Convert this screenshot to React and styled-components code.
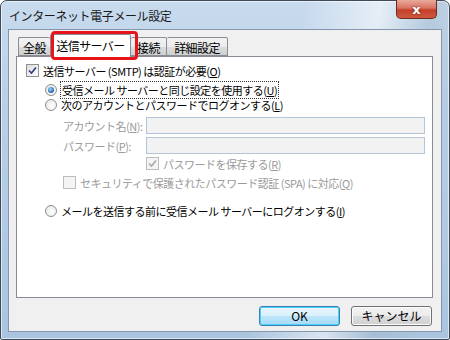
import React from 'react'
import styled, { createGlobalStyle } from 'styled-components'

const GlobalStyle = createGlobalStyle`
  html, body {
    margin: 0;
    padding: 0;
    background: #ffffff;
  }
  body {
    font-family: "Noto Sans CJK JP", "Liberation Sans", sans-serif;
    font-size: 11px;
  }
`

const Window = styled.div`
  width: 450px;
  height: 340px;
  box-sizing: border-box;
  position: relative;
  display: flex;
  flex-direction: column;
  padding: 0 7px 7px 7px;
  border: 1px solid #3e4a57;
  border-radius: 7px 7px 2px 2px;
  background:
    linear-gradient(100deg, rgba(255,255,255,0) 60%, rgba(255,255,255,0.55) 75%, rgba(160,180,200,0.4) 85%, rgba(255,255,255,0) 95%),
    linear-gradient(180deg, #c8dbee 0%, #bad0e8 30%, #aac4df 100%);
  box-shadow: inset 0 0 0 1px rgba(255,255,255,0.6);
`

const TitleBar = styled.div`
  height: 28px;
  display: flex;
  align-items: center;
  padding-left: 1px;
  color: #1a1a1a;
  font-size: 12px;
  letter-spacing: -0.4px;
`

const CloseButton = styled.div`
  position: absolute;
  top: -1px;
  right: 12px;
  width: 41px;
  height: 19px;
  box-sizing: border-box;
  border: 1px solid #6b2a22;
  border-top: none;
  border-radius: 0 0 5px 5px;
  background: linear-gradient(180deg, #e9a99c 0%, #d9725f 45%, #c4402a 55%, #d0583e 100%);
  display: flex;
  align-items: center;
  justify-content: center;
  color: #fff;
  font-family: "DejaVu Sans", sans-serif;
  font-weight: bold;
  font-size: 13px;
  text-shadow: 0 0 2px #5a1a10;
`

const Client = styled.div`
  flex: 1;
  display: flex;
  flex-direction: column;
  background: #f0f0f0;
  border: 1px solid #8396ab;
  padding: 0 8px 0 7px;
`

const TabStrip = styled.div`
  display: flex;
  align-items: flex-end;
  height: 26px;
  padding-left: 2px;
  position: relative;
`

const Tab = styled.div`
  width: ${p => p.$w}px;
  height: ${p => (p.$active ? '23px' : '19px')};
  box-sizing: border-box;
  padding-top: ${p => (p.$active ? '2px' : '1px')};
  margin-bottom: ${p => (p.$active ? '-1px' : '0')};
  text-align: center;
  border: 1px solid #898c95;
  border-bottom: ${p => (p.$active ? 'none' : '1px solid #898c95')};
  border-left-width: ${p => (p.$first || p.$active ? '1px' : '0')};
  border-right-width: ${p => (p.$beforeActive ? '0' : '1px')};
  border-radius: 2px 2px 0 0;
  background: ${p => (p.$active ? '#ffffff' : 'linear-gradient(180deg, #f2f2f2 0%, #ebebeb 50%, #dddddd 51%, #cfcfcf 100%)')};
  font-size: 12px;
  letter-spacing: -0.6px;
  color: #000;
  z-index: ${p => (p.$active ? 2 : 1)};
  position: relative;
`

const Highlight = styled.div`
  position: absolute;
  left: 35px;
  top: 1px;
  width: 87px;
  height: 29px;
  box-sizing: border-box;
  border: 3px solid #e8141c;
  border-radius: 4px;
  z-index: 3;
`

const Panel = styled.div`
  height: 242px;
  box-sizing: border-box;
  background: #ffffff;
  border: 1px solid #898c95;
  padding: 6px 0 0 9px;
  display: flex;
  flex-direction: column;
`

const Row = styled.div`
  display: flex;
  align-items: center;
  height: ${p => p.$h || 15}px;
  margin-top: ${p => p.$mt || 0}px;
  padding-left: ${p => p.$indent || 0}px;
  color: ${p => (p.$disabled ? '#9a9a9a' : '#000')};
  letter-spacing: -0.5px;
  white-space: nowrap;
`

const Check = styled.span`
  width: 13px;
  height: 13px;
  box-sizing: border-box;
  border: 1px solid ${p => (p.$disabled ? '#bcbcbc' : '#8e8f8f')};
  background: ${p => (p.$disabled ? '#f4f4f4' : 'linear-gradient(135deg, #dcdcdc 0%, #ffffff 100%)')};
  margin-right: 4px;
  display: flex;
  align-items: center;
  justify-content: center;
  flex-shrink: 0;
`

const Radio = styled.span`
  width: 12px;
  height: 12px;
  box-sizing: border-box;
  border-radius: 50%;
  border: 1px solid #8e8f8f;
  background: radial-gradient(circle at 60% 60%, #ffffff 0%, #e2e2e2 100%);
  margin-right: 4px;
  display: flex;
  align-items: center;
  justify-content: center;
  flex-shrink: 0;
`

const RadioDot = styled.span`
  width: 6px;
  height: 6px;
  border-radius: 50%;
  background: radial-gradient(circle at 40% 35%, #9fd8fb 0%, #2e6fb7 60%, #1b4a8a 100%);
`

const Focus = styled.span`
  outline: 1px dotted #333;
  outline-offset: 0;
  padding: 0 1px;
`

const Label = styled.span`
  width: ${p => p.$w}px;
  flex-shrink: 0;
`

const TextInput = styled.div`
  width: 279px;
  height: 17px;
  box-sizing: border-box;
  border: 1px solid #b3c5d8;
  background: #f2f2f2;
`

const ButtonRow = styled.div`
  flex: 1;
  display: flex;
  justify-content: flex-end;
  align-items: center;
  gap: 11px;
  padding-right: 1px;
  padding-top: 2px;
`

const Button = styled.div`
  width: 81px;
  height: 20px;
  box-sizing: border-box;
  border: 1px solid ${p => (p.$default ? '#3c7fb1' : '#707070')};
  border-radius: 3px;
  background: ${p => (p.$default
    ? 'linear-gradient(180deg, #eaf6fd 0%, #d9f0fc 50%, #bee6fd 51%, #a7d9f5 100%)'
    : 'linear-gradient(180deg, #f2f2f2 0%, #ebebeb 50%, #dddddd 51%, #cfcfcf 100%)')};
  box-shadow: ${p => (p.$default ? 'inset 0 0 0 1px #48d2f9' : 'inset 0 0 0 1px #fcfcfc')};
  display: flex;
  align-items: center;
  justify-content: center;
  font-size: 12px;
  color: #000;
`

const CheckMark = ({ disabled }) => (
  <svg width='9' height='9' viewBox='0 0 9 9'>
    <path d='M1 4.5 L3.5 7 L8 1.5' fill='none' stroke={disabled ? '#a8a8a8' : '#2a3f7a'} strokeWidth='1.6' />
  </svg>
)

export default function App () {
  return (
    <>
      <GlobalStyle />
      <Window>
        <TitleBar>インターネット電子メール設定</TitleBar>
        <CloseButton>x</CloseButton>
        <Client>
          <TabStrip>
            <Tab $first $beforeActive $w={32}>全般</Tab>
            <Tab $active $w={81}>送信サーバー</Tab>
            <Tab $w={36}>接続</Tab>
            <Tab $w={61}>詳細設定</Tab>
            <Highlight />
          </TabStrip>
          <Panel>
            <Row>
              <Check><CheckMark /></Check>
              送信サーバー (SMTP) は認証が必要(<u>O</u>)
            </Row>
            <Row $mt={4} $indent={19}>
              <Radio><RadioDot /></Radio>
              <Focus>受信メール サーバーと同じ設定を使用する(<u>U</u>)</Focus>
            </Row>
            <Row $indent={19}>
              <Radio />
              次のアカウントとパスワードでログオンする(<u>L</u>)
            </Row>
            <Row $h={17} $mt={5} $indent={37} $disabled>
              <Label $w={83}>アカウント名(<u>N</u>):</Label>
              <TextInput />
            </Row>
            <Row $h={17} $mt={3} $indent={37} $disabled>
              <Label $w={83}>パスワード(<u>P</u>):</Label>
              <TextInput />
            </Row>
            <Row $mt={2} $indent={120} $disabled>
              <Check $disabled><CheckMark disabled /></Check>
              パスワードを保存する(<u>R</u>)
            </Row>
            <Row $mt={4} $indent={37} $disabled>
              <Check $disabled />
              セキュリティで保護されたパスワード認証 (SPA) に対応(<u>Q</u>)
            </Row>
            <Row $mt={13} $indent={19}>
              <Radio />
              メールを送信する前に受信メール サーバーにログオンする(<u>I</u>)
            </Row>
          </Panel>
          <ButtonRow>
            <Button $default>OK</Button>
            <Button>キャンセル</Button>
          </ButtonRow>
        </Client>
      </Window>
    </>
  )
}
